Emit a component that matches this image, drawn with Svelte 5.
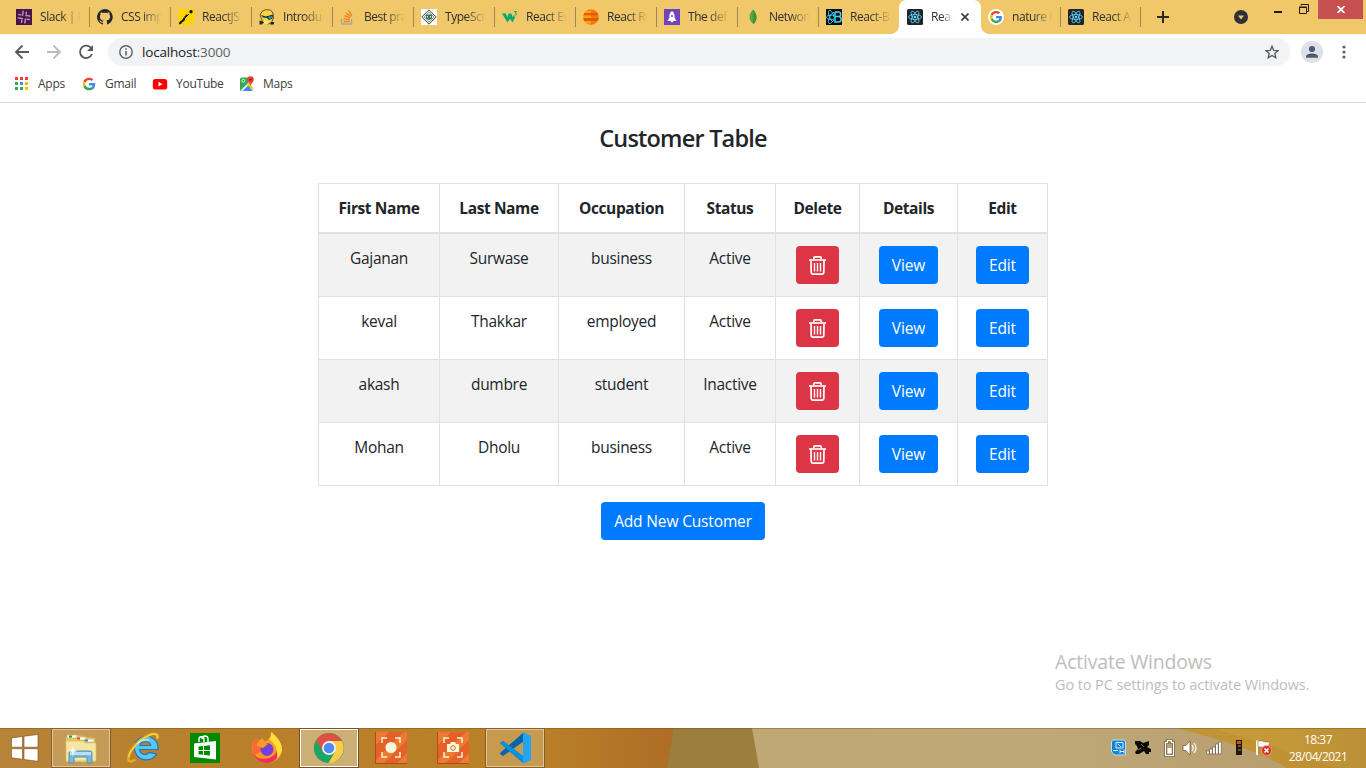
<script>
  const tabs = [
    { icon: 'slack', title: 'Slack | N' },
    { icon: 'github', title: 'CSS imp' },
    { icon: 'reactjs', title: 'ReactJS' },
    { icon: 'intro', title: 'Introduc' },
    { icon: 'stack', title: 'Best pra' },
    { icon: 'node', title: 'TypeScr' },
    { icon: 'w3', title: 'React Ev' },
    { icon: 'globe', title: 'React Ro' },
    { icon: 'rocket', title: 'The def' },
    { icon: 'leaf', title: 'Network' },
    { icon: 'reactb', title: 'React-B', kind: 'before' },
    { icon: 'react', title: 'Reac', kind: 'active' },
    { icon: 'googlebg', title: 'nature i', kind: 'narrow' },
    { icon: 'react', title: 'React A', kind: 'narrow' }
  ];
  const bookmarks = [
    { icon: 'apps', title: 'Apps', w: 67 },
    { icon: 'google', title: 'Gmail', w: 71 },
    { icon: 'youtube', title: 'YouTube', w: 87 },
    { icon: 'maps', title: 'Maps', w: 80 }
  ];
  const heads = ['First Name', 'Last Name', 'Occupation', 'Status', 'Delete', 'Details', 'Edit'];
  const widths = [122, 119, 126, 91, 84, 98, 90];
  const rows = [
    ['Gajanan', 'Surwase', 'business', 'Active'],
    ['keval', 'Thakkar', 'employed', 'Active'],
    ['akash', 'dumbre', 'student', 'Inactive'],
    ['Mohan', 'Dholu', 'business', 'Active']
  ];
  const dots = ['#ea4335', '#ea4335', '#ea4335', '#34a853', '#4285f4', '#fbbc05', '#34a853', '#34a853', '#fbbc05'];
  const tasks = ['explorer', 'ie', 'store', 'firefox', 'chrome', 'record', 'camera', 'vscode'];
</script>

{#snippet googleG()}
  <path fill="#ea4335" d="M8 3.2c1.3 0 2.3.5 3 1.2l2.2-2.2C11.900 1 10.100.3 8 .3 5 .3 2.400 2 1.100 4.500l2.600 2C4.300 4.600 6 3.200 8 3.200z" />
  <path fill="#4285f4" d="M15.500 8.200c0-.6 0-1-.2-1.500H8v3h4.300c-.2 1-.8 1.900-1.700 2.500l2.500 2c1.500-1.400 2.400-3.500 2.400-6z" />
  <path fill="#fbbc05" d="M3.700 9.500a4.800 4.800 0 0 1 0-3l-2.600-2a7.800 7.800 0 0 0 0 7z" />
  <path fill="#34a853" d="M8 15.700c2.100 0 3.900-.7 5.100-1.900l-2.500-2c-.7.5-1.600.8-2.600.8-2 0-3.700-1.300-4.300-3.100l-2.600 2C2.400 14 5 15.700 8 15.700z" />
{/snippet}

{#snippet atom()}
  <g fill="none" stroke="#61dafb" stroke-width=".8">
    <ellipse cx="8" cy="8" rx="6.500" ry="2.500" />
    <ellipse cx="8" cy="8" rx="6.500" ry="2.500" transform="rotate(60 8 8)" />
    <ellipse cx="8" cy="8" rx="6.500" ry="2.500" transform="rotate(120 8 8)" />
  </g>
  <circle cx="8" cy="8" r="1.300" fill="#61dafb" />
{/snippet}

{#snippet icon(name)}
  <svg class="fav" width="16" height="16" viewBox="0 0 16 16">
    {#if name === 'slack'}
      <rect width="16" height="16" fill="#4a154b" />
      <g stroke="#b295b4" stroke-width="1.500" stroke-linecap="round" transform="rotate(8 8 8)"><path d="M6.300 2.500v4M2.500 6.300h1.800M9.700 4.500v-1.500M9.700 6.300h3.800M6.300 11.500v2M2.500 9.700h4M9.700 9.700v4M11.500 9.700h2" /></g>
    {:else if name === 'github'}
      <path fill="#24292e" d="M8 0a8 8 0 0 0-2.500 15.600c.4.1.5-.2.5-.4v-1.500c-2.200.5-2.700-1-2.700-1-.4-.9-.9-1.200-.9-1.200-.7-.5.1-.5.1-.5.8.1 1.200.8 1.200.8.700 1.300 1.900.9 2.300.7.1-.5.3-.9.5-1.100-1.800-.2-3.600-.9-3.600-4 0-.9.3-1.600.8-2.100-.1-.2-.4-1 .1-2.100 0 0 .7-.2 2.200.8a7.500 7.500 0 0 1 4 0c1.500-1 2.200-.8 2.200-.8.4 1.100.2 1.900.1 2.100.5.600.8 1.300.8 2.100 0 3.100-1.900 3.700-3.700 4 .3.200.6.700.6 1.500v2.200c0 .2.100.5.5.4A8 8 0 0 0 8 0z" />
    {:else if name === 'reactjs'}
      <rect width="16" height="16" fill="#ffd400" />
      <path d="M4 12 11 5" stroke="#111" stroke-width="1" /><path d="M1 15.500q-.5-2 1.500-3.500 2.500-1 3-3.500l1.500 1q.5 2-2.500 3.500-1 2-3.500 2.500zM6 8l3-3 1 1-3 3.500z" fill="#111" /><circle cx="13" cy="2.800" r="1.700" fill="#111" />
    {:else if name === 'intro'}
      <path d="M1 6 3 2.500 6.500.7l5 .3L14 4l.500 5-2 4.500L9 15l-5-1.500z" fill="#ffd43b" stroke="#3a3520" stroke-width=".8" /><path d="m2 6 5 1.500 7-2-.500 4-3.500 1.500-2-2-4-.500z" fill="#14324a" /><path d="m9 8 4-1-.5 2-2 1z" fill="#2ca5e0" /><path d="m.5 11.500 4 1.500-1.500 2.500H.500zM12 13h3v2.500h-4z" fill="#222" /><path d="M5 10l2 2 4 .5-2 2.500H5z" fill="#ffe27a" />
    {:else if name === 'stack'}
      <path d="M1.500 10v5h10v-5" fill="none" stroke="#a6a69f" stroke-width="1.400" /><g stroke="#f48024" stroke-width="1.300"><path d="M3.500 12.500h6.300M3.600 9.700l6.300 1M4.300 6.700l5.900 2.200M6 3.900l5 3.900M8.500 1.500l3.500 5.200" /></g>
    {:else if name === 'node'}
      <rect width="16" height="16" fill="#fff" /><path d="m8 .8 7.200 7.200L8 15.200.8 8z" fill="#e8efe9" stroke="#444" /><path d="m8 3 5 5-5 5-5-5z" fill="none" stroke="#7a847c" stroke-width=".8" /><path d="M5 5.500h6v4l-3 1.500-3-1.500z" fill="#3a7355" /><path d="M6.500 7v1.500M9.500 7v1.500" stroke="#dce8df" />
    {:else if name === 'w3'}
      <path d="M0 4.500h3.800l1.400 3.700L6.600 4.500h2.600l1.500 3.700L12 6l1 2.500-2.500 5L8 9.700 5.500 13.500z" fill="#04aa6d" /><path d="M12 2.500h2.500L13.300 4c2 .2 1.500 2.500-.8 2" fill="none" stroke="#04aa6d" />
    {:else if name === 'globe'}
      <circle cx="8" cy="8" r="7.800" fill="#f47b0b" /><path d="M1.300 4h13.400v2.500H.4zM.3 9h15.400l-1 3H1.300z" fill="#df5c0a" /><path d="M3 2h5v2H1.700zM0 6.500h8V9H0zM1.500 12H8v2.500H4z" fill="#ffa800" />
    {:else if name === 'rocket'}
      <rect width="16" height="16" fill="#7244b9" /><path d="M8 2c2.200 1.600 3 4 2.500 6.500l2 3.500h-3L8 13.500 6.500 12h-3l2-3.500C5 6 5.800 3.600 8 2z" fill="#fff" /><circle cx="8" cy="7" r="1" fill="#7244b9" />
    {:else if name === 'leaf'}
      <path d="M8 .5c5 5 4.500 11 0 14C3.500 11.500 3.500 5 8 .5z" fill="#4faa41" /><path d="M8 .5v15c5-4 4.500-10 0-15z" fill="#409433" />
    {:else if name === 'reactb'}
      <rect width="16" height="16" fill="#050b0d" />
      <g fill="none" stroke="#41d1f5"><path d="M8 10c-5 1-8-.5-7.500-2S4 5.500 8 6.500M3 1.500c2-1 5 4 5 7M3 14.500C1 13 4 5 8 3M3 1.500C1 3 4 11 7 13M3 14.500c2 .5 4-2 5-4" /><path d="M9 3h3.500c3 0 3 4.500 0 4.500H9m3.500 0c3.500 0 3.500 5.500 0 5.500H9V3" stroke-width="1.500" /></g>
    {:else if name === 'react'}
      <rect width="16" height="16" rx="1.500" fill="#20232a" />{@render atom()}
    {:else if name === 'googlebg'}
      <circle cx="8" cy="8" r="8" fill="#fff" /><g transform="translate(1.800 1.800) scale(.78)">{@render googleG()}</g>
    {:else if name === 'google'}
      <g transform="translate(1.500 1.500) scale(.82)">{@render googleG()}</g>
    {:else if name === 'apps'}
      {#each dots as d, i}<rect x={1 + (i % 3) * 5} y={1 + Math.floor(i / 3) * 5} width="3" height="3" fill={d} />{/each}
    {:else if name === 'youtube'}
      <rect x=".8" y="3" width="14.400" height="10.500" rx="2.500" fill="#f00" /><path d="m6.500 5.800 4 2.400-4 2.400z" fill="#fff" />
    {:else if name === 'maps'}
      <path d="M1 3a1.500 1.500 0 0 1 1.500-1.500H11V15H2.500A1.500 1.500 0 0 1 1 13.500z" fill="#34a853" /><path d="m2 15 6-6 6 6z" fill="#4285f4" /><path d="m1.500 14.500 10-10 1.500 1.500-9.500 9z" fill="#e8eaed" /><path d="m8 9 2-2 4 5v2z" fill="#fbbc05" /><circle cx="4.300" cy="4.800" r="1.500" fill="none" stroke="#fff" stroke-width=".8" /><path d="M11.500.3a3.300 3.300 0 0 1 3.300 3.400c0 2.300-2.500 3-3.100 6.300-.6-3.300-3.500-4-3.500-6.300A3.300 3.300 0 0 1 11.500.3z" fill="#ea4335" /><circle cx="11.500" cy="3.600" r="1.200" fill="#8c1f17" />
    {/if}
  </svg>
{/snippet}

{#snippet taskIcon(name)}
  <svg width="32" height="32" viewBox="0 0 32 32">
    {#if name === 'explorer'}
      <path d="M1 5h8l1-2 8 1 2 1 10 1v24H1z" fill="#e4c56d" /><path d="M2 3h10v3H2zM11 5h10v3H11zM20 7h9v3h-9z" fill="#fffbe9" stroke="#c8ab60" stroke-width=".6" /><path d="M4 3.500h3v2H4z" fill="#12a52e" /><path d="M12 5.500h3v2h-3z" fill="#d9452b" /><path d="M20 7.500h3v2h-3z" fill="#2494d1" /><path d="M1 9h17l2 2h11v18H1z" fill="#f7e6a2" stroke="#d9bd67" stroke-width=".7" /><path d="M4 21q0-2 2-2h19q2 0 2 2v10h-5v-6H9v6H4z" fill="#79b9dc" stroke="#4f93bb" /><path d="M5 20h21v3H5z" fill="#b9e0f2" /><path d="m8 13 .7 4.500 3.500 1.500-3.500 1-.7 5-1-5-4-1 4-1.500z" fill="#fff" opacity=".9" />
    {:else if name === 'ie'}
      <path d="M29.500 22A11.800 11.800 0 1 1 31 17.500H12.500c.5 5 7 6.500 9.500 3zM12.800 13.500h11c-1-5-10-5-11 0z" fill="#5cc5f2" fill-rule="evenodd" stroke="#1678bd" stroke-width="1.200" /><path d="M30 7c2.500-5-2-6.500-8-4C12 7 3 18 1.500 25c-.8 5 2.500 5.500 7 2.500" fill="none" stroke="#e7ad16" stroke-width="2.600" /><path d="M30 6c1.500-4-2-5-8-2.500C12 8 3 18 1.500 25" fill="none" stroke="#ffdc4d" stroke-width="1.200" /><path d="M10 12q4-5 12-4" fill="none" stroke="#c3eefb" stroke-width="1.400" />
    {:else if name === 'store'}
      <rect x="1" y="1" width="30" height="30" fill="#008a00" /><path d="m5 11.500 22-2.500v18.500L5 25z" fill="#fff" /><path d="M10 10V7c0-3 5-3 5 0v3m-2-3c0-4 6-4 6 0v3" fill="none" stroke="#fff" stroke-width="1.400" /><path d="m9.500 14.600 4.500-.6V18H9.500zm5.500-.700 6-.7V18h-6zM9.500 19H14v3.800l-4.500-.5zm5.500 0h6v4.600l-6-.7z" fill="#008a00" />
    {:else if name === 'firefox'}
      <path d="M21 0c4 4 9 8 10 17 .5 8-7 14-15 14S1 25 1 17c0-4 1-7 4-11l2 3 5-3c0 2 1 3 3 3 4-2 5-5 6-9z" fill="#ff9a20" /><path d="M1 16c1 9 8 13 17 10 6-2 8-6 9-11 3 8-3 16-11 16S1 25 1 16z" fill="#f42c63" /><path d="M5 6c-4 5-5 11-1 17l8-5-5-9z" fill="#ff643d" /><path d="M20 0c5 5 11 9 11 18-1 4-3 7-5 8 1-10-2-14-8-19 2-2 2-4 2-7z" fill="#ffdf38" /><circle cx="16" cy="17.500" r="6.500" fill="#7540dd" /><path d="M6 11q5-3 11 1l-5 4-6-2z" fill="#ff9a20" />
    {:else if name === 'chrome'}
      <circle cx="16" cy="16" r="15" fill="#1fa463" /><path d="M16 16 3 8.500A15 15 0 0 1 29 9H16z" fill="#dd5144" /><path d="M16 9h13a15 15 0 0 1-13.500 22l6.600-11.500z" fill="#ffcd46" /><path d="M3 8.500 9.900 20 16 9z" fill="#dd5144" /><path d="M3 8.500 9.900 19.500l5.600 11.500A15 15 0 0 1 3 8.500z" fill="#1fa463" /><circle cx="16" cy="16" r="7" fill="#f4f4f4" /><circle cx="16" cy="16" r="5.300" fill="#4c8bf5" />
    {:else if name === 'record' || name === 'camera'}
      <path d="M0 0h32v32H0z" fill="#ec7b31" /><path d="M0 14 14 0h15L0 29zM8 32 32 8v13L21 32z" fill="#e66129" /><path d="M.5 0v31.500H32" fill="none" stroke="#b14d1c" />
      <path d="M7 11V6h5m8 0h5v5m0 9v5h-5m-8 0H7v-5" fill="none" stroke="#fcf4d8" stroke-width="1.500" />
      {#if name === 'record'}<circle cx="16" cy="15.500" r="5.500" fill="#f2f8dc" />{:else}<path d="M10 12h3l1-2h4l1 2h3v8H10z" fill="#f2f8dc" /><circle cx="16" cy="16" r="2.300" fill="none" stroke="#e66129" />{/if}
    {:else}
      <path d="m1 11 3-2 21 16-1 6z" fill="#087dcb" /><path d="M1 21 24 1l1 8L4 24l-3-2z" fill="#0065a9" /><path d="m1 11 3-2 20 15v7z" fill="#0990dc" /><path d="m24 0 8 4v24l-8 4z" fill="#24a5f2" />
    {/if}
  </svg>
{/snippet}

<div class="screen">
  <header class="strip">
    {#each tabs as t}
      <div class="tab {t.kind ?? ''}">
        {@render icon(t.icon)}
        <span class="title">{t.title}</span>
        {#if t.kind === 'active'}
          <svg class="x" width="8" height="8" viewBox="0 0 8 8"><path d="m.5.5 7 7m0-7-7 7" stroke="#3c4043" stroke-width="1.700" /></svg>
        {/if}
      </div>
    {/each}
    <svg class="plus" width="12" height="12" viewBox="0 0 12 12"><path d="M6 0v12M0 6h12" stroke="#2b2a26" stroke-width="2" /></svg>
    <div class="controls">
      <svg class="search" width="14" height="14" viewBox="0 0 14 14"><circle cx="7" cy="7" r="7" fill="#2f3033" /><path d="M4 5.500h6L7 9.500z" fill="#f0c869" /></svg>
      <svg class="min" width="8" height="2"><path fill="#1f1a10" d="M0 0h8v2H0z" /></svg>
      <svg class="restore" width="10" height="10" viewBox="0 0 10 10"><path d="M.5 3.500h7v6h-7zM2 1.500V.500h7.500v7H8M0 3h8" fill="none" stroke="#1f1a10" /></svg>
      <div class="close"><svg width="8" height="7" viewBox="0 0 8 7"><path d="m.5 0 7 7m0-7-7 7" stroke="#fff" stroke-width="1.800" /></svg></div>
    </div>
  </header>

  <div class="toolbar">
    <svg width="100" height="36" viewBox="0 0 100 36" fill="none" stroke-width="1.800">
      <path d="M29 18H16m6.500-6.500L16 18l6.500 6.500" stroke="#55585c" />
      <path d="M47 18h13m-6.500-6.500L60 18l-6.500 6.500" stroke="#babcbe" />
      <path d="M91.500 14.500A6.200 6.200 0 1 0 92 20" stroke="#55585c" /><path d="M93 11v6h-6z" fill="#55585c" />
    </svg>
    <div class="omni">
      <svg width="14" height="14" viewBox="0 0 14 14"><circle cx="7" cy="7" r="6.200" fill="none" stroke="#5f6368" stroke-width="1.400" /><path d="M7 6v4.500M7 3.300v1.500" stroke="#5f6368" stroke-width="1.500" /></svg>
      <span class="url">localhost<i>:3000</i></span>
      <svg class="star" width="14" height="14" viewBox="0 0 14 14"><path d="m7 1.200 1.700 4.100 4.500.3-3.400 2.900 1 4.300L7 10.500l-3.800 2.300 1-4.300L.8 5.600l4.500-.3z" fill="none" stroke="#55585c" stroke-width="1.300" /></svg>
    </div>
    <svg class="avatar" width="22" height="22" viewBox="0 0 22 22"><circle cx="11" cy="11" r="11" fill="#dee1e6" /><circle cx="11" cy="8" r="3.100" fill="#4f5b70" /><path d="M5 16.800v-1.300c0-4 12-4 12 0v1.300z" fill="#4f5b70" /></svg>
    <svg class="dots" width="4" height="14" viewBox="0 0 4 14" fill="#5f6368"><circle cx="2" cy="2" r="1.600" /><circle cx="2" cy="7" r="1.600" /><circle cx="2" cy="12" r="1.600" /></svg>
  </div>

  <nav class="bookmarks">
    {#each bookmarks as b}
      <div class="bm" style="width:{b.w}px">{@render icon(b.icon)}<span>{b.title}</span></div>
    {/each}
  </nav>

  <main>
    <h1>Customer Table</h1>
    <table>
      <colgroup>{#each widths as w}<col style="width:{w}px" />{/each}</colgroup>
      <thead><tr>{#each heads as h}<th>{h}</th>{/each}</tr></thead>
      <tbody>
        {#each rows as r}
          <tr>
            {#each r as c}<td>{c}</td>{/each}
            <td>
              <button class="btn del" aria-label="Delete">
                <svg width="17" height="19" viewBox="0 0 17 19" fill="none" stroke="#fff"><path d="M0 4h17" stroke-width="1.600" /><path d="M4.800 3.500V2q0-1.100 1.100-1.100h5.200q1.100 0 1.100 1.100v1.500M2 4.500l.2 11.700q.1 1.900 1.800 1.900h9q1.700 0 1.800-1.900L15 4.500" stroke-width="1.700" /><path d="M5.500 7v8.500M8.500 7v8.500M11.500 7v8.500" stroke-width="1.400" /></svg>
              </button>
            </td>
            <td><button class="btn view">View</button></td>
            <td><button class="btn edit">Edit</button></td>
          </tr>
        {/each}
      </tbody>
    </table>
    <button class="btn add">Add New Customer</button>
    <div class="watermark"><p class="big">Activate Windows</p><p class="small">Go to PC settings to activate Windows.</p></div>
  </main>

  <footer class="taskbar">
    <svg class="wall" width="1366" height="40" viewBox="0 0 1366 40" preserveAspectRatio="none">
      <defs>
        <linearGradient id="wa"><stop offset="0" stop-color="#b68339" /><stop offset=".35" stop-color="#b9802b" /><stop offset=".8" stop-color="#ba8028" /><stop offset="1" stop-color="#ae6b26" /></linearGradient>
        <linearGradient id="wb"><stop offset="0" stop-color="#c0a873" /><stop offset=".5" stop-color="#bea878" /><stop offset="1" stop-color="#b79a6c" /></linearGradient>
        <linearGradient id="wc"><stop offset="0" stop-color="#c89e3e" /><stop offset=".6" stop-color="#c49837" /><stop offset="1" stop-color="#bb8f36" /></linearGradient>
      </defs>
      <path d="M0 0h680v40H0z" fill="url(#wa)" /><path d="M750 0h616v40H750z" fill="url(#wb)" />
      <path d="M674 0h78l7 40h-92z" fill="#9c7e3d" />
      <path d="M1175 0h191v40h-79q-36-22-112-40z" fill="url(#wc)" />
      <path d="M1175 0h35q60 16 125 40h-48q-36-22-112-40z" fill="#b98727" opacity=".4" />
      <path d="M0 .5h1366" stroke="#6f4b18" opacity=".4" />
    </svg>
    <div class="start">
      <svg width="28" height="28" viewBox="0 0 28 28"><path d="m.5 4 11-1.600v10.800H.5zM13 2.200 27 .5v12.700H13zM.5 14.700h11v10.600l-11-1.500zM13 14.700h14v12.600l-14-1.800z" fill="#fff" stroke="#795015" stroke-width=".6" /></svg>
    </div>
    {#each tasks as t}<div class="task {t}">{@render taskIcon(t)}</div>{/each}
    <div class="tray">
      <svg width="164" height="20" viewBox="0 0 164 20">
        <path d="M1.500 4q0-2 2-2h10q2 0 2 2v13H5.500q-4-1-4-4z" fill="#1582d2" stroke="#b8e1f5" /><path d="M6 4.500h7v5.500H6zM8 6l3 3M3 12.500h5m2-1v4m0-2h4m0-2v4" fill="none" stroke="#d8f1ff" />
        <path d="M25 3h5l3 2 6-2v4l-2 2 4 2v3h-2v2h-3l-2-3-5 3h-3l-1-2 3-3-1-3-2-2z" fill="#0d0a05" /><path d="m31 6 3 3m-6 3 3-2" stroke="#a98e59" stroke-width=".8" />
        <path d="M55.500 4.500h2v-2h4v2h2v13h-8z" fill="none" stroke="#49391d" stroke-width="2.500" /><path d="M55.500 4.500h2v-2h4v2h2v13h-8z" fill="none" stroke="#fff" stroke-width="1.400" /><path d="M57.500 10h4v5.500h-4z" fill="#fff" />
        <path d="M73 7.500h3l4-4.500v14l-4-4.500h-3z" fill="#fff" stroke="#5b4a2a" stroke-width=".7" /><path d="M82 7q2.500 3 0 6m2-8q4 5 0 10" fill="none" stroke="#fff" stroke-width="1.200" />
        <path d="M96.500 13h2.800v3h-2.800zm3-2h2.800v5h-2.800zm3-2h2.800v7h-2.800zm3-3h2.800v10h-2.800zm3-2h2.800v12h-2.800z" fill="#fff" stroke="#5b4a2a" stroke-width=".6" />
        <path d="M126 2h6v15h-6z" fill="#1e1713" /><path d="M127 3h4v3h-4z" fill="#e84525" /><path d="M128 8h3M128 12h3" stroke="#b48a62" />
        <path d="M147 2.500V17" stroke="#fff" stroke-width="1.800" /><path d="M148 3q4-1 7 1h5l-2 5h-10z" fill="#fff" stroke="#6d542a" stroke-width=".5" /><circle cx="156.500" cy="12.500" r="5" fill="#d5322b" stroke="#f6b1a4" stroke-width=".7" /><path d="m154.500 10.500 4 4m0-4-4 4" stroke="#fff" stroke-width="1.600" />
      </svg>
      <div class="clock"><span>18:37</span><span>28/04/2021</span></div>
    </div>
  </footer>
</div>

<style>
  :global(body) { margin: 0; background: #fff; overflow: hidden; }
  .screen { width: 1366px; height: 768px; display: flex; flex-direction: column; font-family: "Open Sans", "Noto Sans", sans-serif; color: #212529; overflow: hidden; }
  svg { display: block; flex: none; }
  .strip { height: 34px; flex: none; display: flex; background: #f0c869; padding-left: 9px; }
  .tab { box-sizing: border-box; width: 81px; height: 34px; padding-left: 7px; display: flex; align-items: center; gap: 8px; position: relative; flex: none; }
  .tab::after { content: ""; position: absolute; right: 0; top: 7px; width: 1px; height: 20px; background: #9d8757; }
  .before::after, .active::after { display: none; }
  .before, .narrow { width: 80px; }
  .active { width: 82px; padding-left: 8px; background: #fff; border-radius: 7px 7px 0 0; }
  .active::before { content: ""; position: absolute; left: -8px; right: -8px; bottom: 0; height: 8px; background: radial-gradient(circle at 0 0, transparent 7.5px, #fff 8px) left / 8px 8px no-repeat, radial-gradient(circle at 100% 0, transparent 7.5px, #fff 8px) right / 8px 8px no-repeat; }
  .title { width: 41px; overflow: hidden; white-space: nowrap; font-size: 12px; letter-spacing: -.45px; line-height: 18px; color: #2d2f31; -webkit-mask-image: linear-gradient(90deg, #000 50%, transparent); mask-image: linear-gradient(90deg, #000 50%, transparent); }
  .active .title { width: 22px; }
  .x { margin-left: 0; }
  .plus { margin: 11px 0 0 16px; }
  .controls { display: flex; margin-left: auto; }
  .search { margin: 10px 26px 0 0; }
  .min { margin: 11px 17px 0 0; }
  .restore { margin: 4px 9px 0 0; }
  .close { width: 45px; height: 19px; margin-right: 3px; background: #c75050; display: flex; align-items: center; justify-content: center; }
  .toolbar { height: 36px; flex: none; display: flex; align-items: center; }
  .omni { box-sizing: border-box; margin-left: 8px; width: 1182px; height: 28px; border-radius: 14px; background: #f1f3f4; display: flex; align-items: center; padding: 0 11px; }
  .url { margin-left: 9px; font-size: 13.500px; letter-spacing: -.2px; color: #202124; }
  .url i { font-style: normal; color: #5f6368; }
  .star { margin-left: auto; }
  .avatar { margin-left: 11px; }
  .dots { margin-left: 19px; }
  .bookmarks { height: 32px; flex: none; display: flex; border-bottom: 1px solid #dadce0; padding-left: 14px; }
  .bm { display: flex; gap: 8px; align-items: center; height: 27px; font-size: 12px; letter-spacing: -.25px; color: #3c4043; }
  main { flex: 1; display: flex; flex-direction: column; align-items: center; position: relative; }
  h1 { margin: 20px 0 30px; font-size: 23.500px; line-height: 30px; font-weight: 600; letter-spacing: -.8px; }
  table { width: 730px; table-layout: fixed; border-collapse: separate; border-spacing: 0; font-size: 15.500px; line-height: 24px; text-align: center; border-top: 1px solid #dee2e6; }
  th, td { box-sizing: border-box; padding: 12px 0; border-right: 1px solid #dee2e6; border-bottom: 1px solid #dee2e6; vertical-align: top; }
  th:first-child, td:first-child { border-left: 1px solid #dee2e6; }
  th { height: 50px; border-bottom-width: 2px; font-weight: 700; letter-spacing: -.4px; }
  td { height: 63px; letter-spacing: -.3px; }
  tbody tr:nth-child(odd) { background: #f2f2f2; }
  .btn { border: 0; padding: 0; height: 38px; border-radius: 4px; background: #007bff; color: #fff; font: 15.500px/38px "Open Sans", sans-serif; letter-spacing: -.15px; display: flex; align-items: center; justify-content: center; margin: 0 auto; }
  .del { width: 43px; background: #dc3545; }
  .view { width: 59px; }
  .edit { width: 53px; }
  .add { width: 164px; margin-top: 16px; }
  .watermark { align-self: flex-end; margin: auto 56px 33px 0; width: 255px; color: #bdbdbd; }
  p { margin: 0; white-space: nowrap; }
  .big { font-size: 19.500px; line-height: 24px; letter-spacing: -.2px; }
  .small { font-size: 14.500px; line-height: 21px; letter-spacing: -.1px; }
  .taskbar { height: 40px; flex: none; display: flex; position: relative; align-items: center; }
  .wall { position: absolute; inset: 0; }
  .start { position: relative; width: 41px; padding-left: 11px; }
  .task { box-sizing: border-box; position: relative; width: 58px; height: 38px; margin-right: 4px; display: flex; align-items: center; justify-content: center; }
  .explorer, .vscode { border: 1px solid #e0c595; background: #ddc08c66; box-shadow: 0 0 0 1px #85602d; }
  .chrome { border: 1px solid #fff; background: #d7c49aaa; box-shadow: 0 0 0 1px #745129; }
  .tray { position: relative; display: flex; align-items: center; margin-left: auto; margin-right: 18px; }
  .clock { width: 60px; margin-left: 14px; font-size: 12px; line-height: 17px; letter-spacing: -.5px; color: #fff; display: flex; flex-direction: column; align-items: center; white-space: nowrap; }
</style>
